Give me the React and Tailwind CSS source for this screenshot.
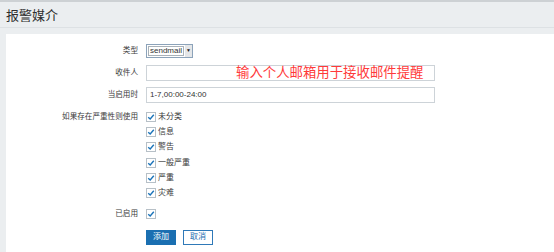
import React from "react";

const font = { fontFamily: '"Liberation Sans", "Noto Sans CJK SC", sans-serif' };

function Check() {
  return (
    <span className="flex h-[10px] w-[10px] items-center justify-center border border-[#b7c0c7] bg-white">
      <svg width="8" height="8" viewBox="0 0 8 8">
        <path d="M1.2 4.2 L3.2 6 L6.8 1.8" fill="none" stroke="#1b74ba" strokeWidth="1.4" />
      </svg>
    </span>
  );
}

function Label({ children }) {
  return (
    <div className="w-[133px] shrink-0 pr-[1px] text-right text-[7.6px] leading-none text-[#3a3a3a]">
      {children}
    </div>
  );
}

export default function App() {
  const sev = ["未分类", "信息", "警告", "一般严重", "严重", "灾难"];
  return (
    <div className="h-[252px] w-[554px] overflow-hidden bg-[#ebeef0]" style={font}>
      <div className="h-[2px] bg-[#cdd1d4]" />
      <div className="flex h-[26px] items-center border-b border-[#dde1e4] pl-[6px] pt-[2px] text-[13px] text-[#2e2e2e]">
        报警媒介
      </div>
      <div className="mt-[6px] ml-[6px] h-[230px] bg-white pt-[10px]">
        {/* 类型 */}
        <div className="flex h-[14px] items-center gap-[7px]">
          <Label>类型</Label>
          <div className="flex h-[14px] items-stretch border border-[#8ca3ba]">
            <div className="m-[1px] flex items-center border border-[#a9b1b8] px-[1px] text-[8px] leading-none text-[#333]">
              sendmail
            </div>
            <div className="flex w-[7px] items-center justify-center bg-[#e4e6e8] text-[5px] text-[#222]">▼</div>
          </div>
        </div>
        {/* 收件人 */}
        <div className="mt-[7px] flex h-[16px] items-center gap-[7px]">
          <Label>收件人</Label>
          <div className="flex h-[16px] w-[289px] items-center border border-[#cdd3d8] pl-[89px] text-[13.4px] leading-none text-[#ff3a3a]">
            输入个人邮箱用于接收邮件提醒
          </div>
        </div>
        {/* 当启用时 */}
        <div className="mt-[6px] flex h-[16px] items-center gap-[7px]">
          <Label>当启用时</Label>
          <div className="flex h-[16px] w-[289px] items-center border border-[#cdd3d8] pl-[3px] text-[8px] leading-none text-[#333]">
            1-7,00:00-24:00
          </div>
        </div>
        {/* severity */}
        <div className="mt-[6px] flex gap-[7px]">
          <div className="flex h-[15.3px] items-center">
            <Label>如果存在严重性则使用</Label>
          </div>
          <div className="flex flex-col">
            {sev.map((s) => (
              <div key={s} className="flex h-[15.3px] items-center gap-[2px]">
                <Check />
                <span className="text-[8px] leading-none text-[#3a3a3a]">{s}</span>
              </div>
            ))}
          </div>
        </div>
        {/* 已启用 */}
        <div className="mt-[6px] flex h-[15px] items-center gap-[7px]">
          <Label>已启用</Label>
          <Check />
        </div>
        {/* buttons */}
        <div className="mt-[8px] flex gap-[7px] pl-[140px]">
          <button className="flex h-[15px] w-[30px] items-center justify-center bg-[#1a6fb1] text-[8px] leading-none text-white">
            添加
          </button>
          <button className="flex h-[15px] w-[30px] items-center justify-center border border-[#2f79b8] bg-white text-[8px] leading-none text-[#1f6db0]">
            取消
          </button>
        </div>
      </div>
    </div>
  );
}
